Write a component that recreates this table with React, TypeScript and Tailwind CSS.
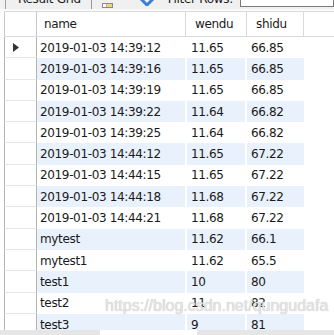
import React from 'react';

// rows of the result grid
const rows: Array<[string, string, string]> = [
  ['2019-01-03 14:39:12', '11.65', '66.85'],
  ['2019-01-03 14:39:16', '11.65', '66.85'],
  ['2019-01-03 14:39:19', '11.65', '66.85'],
  ['2019-01-03 14:39:22', '11.64', '66.82'],
  ['2019-01-03 14:39:25', '11.64', '66.82'],
  ['2019-01-03 14:44:12', '11.65', '67.22'],
  ['2019-01-03 14:44:15', '11.65', '67.22'],
  ['2019-01-03 14:44:18', '11.68', '67.22'],
  ['2019-01-03 14:44:21', '11.68', '67.22'],
  ['mytest', '11.62', '66.1'],
  ['mytest1', '11.62', '65.5'],
  ['test1', '10', '80'],
  ['test2', '11', '82'],
  ['test3', '9', '81'],
];

const App = () => {
  return (
    <div
      className="relative w-[334px] h-[335px] overflow-hidden bg-white text-[#1a1a1a]"
      style={{fontFamily: '"DejaVu Sans", Verdana, sans-serif'}}
    >
      {/* Toolbar (cut off at the top) */}
      <div className="h-[9px] bg-[#f0f0f0] overflow-hidden flex items-end text-[12px] leading-none">
        <div className="flex items-end h-full">
          <div className="ml-[5px] w-px h-full bg-[#a0a0a0]" />
          <span className="ml-[12px] mb-[4px] tracking-[-0.3px]">Result Grid</span>
          <div className="ml-[10px] w-px h-[9px] bg-[#9a9a9a]" />
          {/* grid icon */}
          <div className="ml-[10px] mb-[1px] w-[11px] h-[5px] border border-[#8a8a8a] bg-[#f5d37a] flex">
            <div className="w-[4px] h-full bg-white border-r border-[#b0b0b0]" />
          </div>
          {/* filter icon */}
          <svg className="ml-[26px] mb-[3px]" width="16" height="7" viewBox="0 0 16 7">
            <path d="M2 0 L8 6 L14 0" fill="none" stroke="#3b7fd4" strokeWidth="3" />
          </svg>
          <span className="ml-[13px] mb-[4px] tracking-[-0.3px]">Filter Rows:</span>
          <div className="ml-[7px] mb-[2px] flex-1 w-[100px] h-[14px] bg-white border border-[#7a7a7a]" />
        </div>
      </div>
      <div className="h-[2px] bg-[#fafafa]" />

      {/* Grid */}
      <div className="ml-[4px] text-[12px] tracking-[-0.35px]">
        {/* Header */}
        <div className="flex h-[26px] border-t border-b border-[#dadada]">
          <div className="w-[33px] border-l border-r border-[#c8c8c8]" />
          <div className="w-[149px] border-r border-[#dadada] pl-[7px] flex items-center">name</div>
          <div className="w-[61px] border-r border-[#dadada] pl-[9px] flex items-center">wendu</div>
          <div className="w-[57px] border-r border-[#dadada] pl-[9px] flex items-center">shidu</div>
        </div>

        {/* Data rows */}
        {rows.map((r, i) => {
          const band = i % 2 === 1 ? 'bg-[#e9f1fc]' : 'bg-white';
          return (
            <div key={i} className="flex h-[21.3px]">
              <div className="w-[33px] border-l border-r border-b border-l-[#b4b4b4] border-r-[#b4b4b4] border-b-[#e6e6e6] flex items-center pl-[8px]">
                {i === 0 && (
                  <svg width="6" height="9" viewBox="0 0 6 9">
                    <path d="M0 0 L6 4.5 L0 9 Z" fill="#333" />
                  </svg>
                )}
              </div>
              <div className={`w-[150px] border-r-2 border-white pl-[3px] flex items-center ${band}`}>{r[0]}</div>
              <div className={`w-[60px] border-r-2 border-white pl-[4px] flex items-center ${band}`}>{r[1]}</div>
              <div className={`w-[57px] pl-[4px] flex items-center ${band}`}>{r[2]}</div>
            </div>
          );
        })}
      </div>

      {/* Horizontal scrollbar */}
      <div className="absolute left-0 bottom-0 w-full h-[5px] bg-[#e6e6e6] flex">
        <div className="ml-[100px] w-[97px] h-full bg-white" />
      </div>

      {/* Watermark */}
      <div
        className="absolute left-[105px] top-[294px] text-[16px] text-[#e4e4e4] whitespace-nowrap"
        style={{fontFamily: '"Liberation Sans", Arial, sans-serif', textShadow: '0 0 1px #b8b8b8'}}
      >
        https://blog.csdn.net/qungudafa
      </div>
    </div>
  );
};

export default App;
